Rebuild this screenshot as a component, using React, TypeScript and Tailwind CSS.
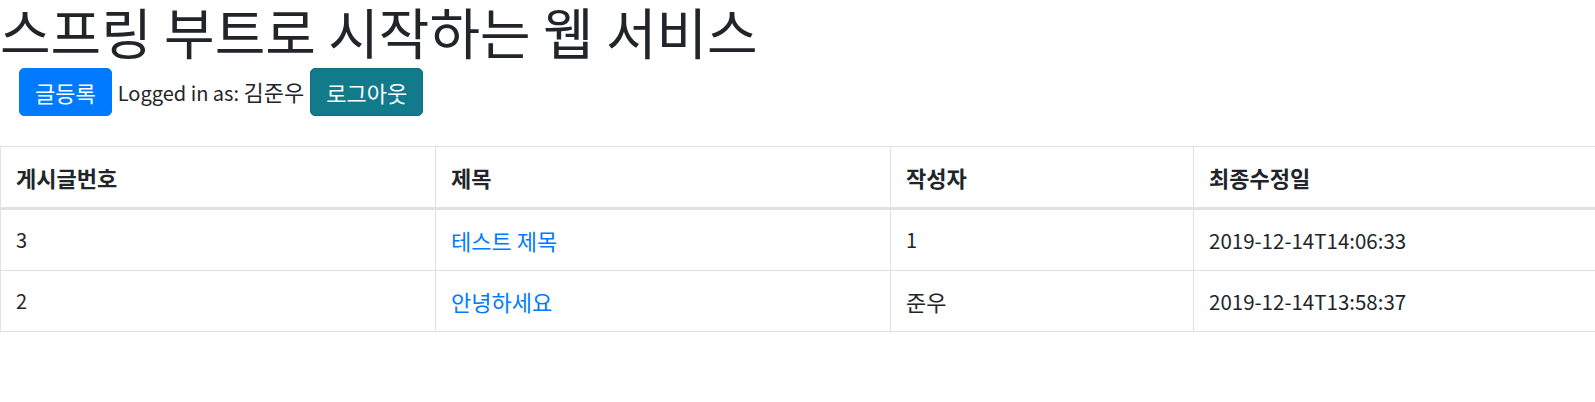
import React from "react";

const posts = [
  { id: 3, title: "테스트 제목", author: "1", modified: "2019-12-14T14:06:33" },
  { id: 2, title: "안녕하세요", author: "준우", modified: "2019-12-14T13:58:37" },
];

// hangul-only text renders a touch wider than the latin next to it
const ko = "text-[22px]";
const cell = "border border-[#dee2e6] px-[15px] py-[15px]";

export default function App() {
  return (
    <div
      className="min-h-screen bg-white text-[#212529] text-[20px] leading-[30px] overflow-hidden"
      style={{ fontFamily: '"Noto Sans CJK KR", "Noto Sans", sans-serif' }}
    >
      {/* Title */}
      <h1 className="text-[55px] leading-[60px] font-normal mb-[8px] whitespace-nowrap">
        스프링 부트로 시작하는 웹 서비스
      </h1>

      {/* Actions */}
      <div className="px-[19px] flex items-center gap-[6px]">
        <a className={`${ko} inline-block bg-[#007bff] border border-[#007bff] text-white rounded-[5px] px-[15px] py-[8px] leading-[30px]`}>
          글등록
        </a>
        <span>
          Logged in as: <span className={ko}>김준우</span>
        </span>
        <a className={`${ko} inline-block bg-[#117a8b] border border-[#10707f] text-white rounded-[5px] px-[15px] py-[8px] leading-[30px]`}>
          로그아웃
        </a>
      </div>

      {/* Posts table */}
      <table className="w-full mt-[30px] border-collapse">
        <thead>
          <tr className={`${ko} text-left`}>
            <th className={`${cell} w-[435px] border-b-[3px] font-bold`}>게시글번호</th>
            <th className={`${cell} w-[455px] border-b-[3px] font-bold`}>제목</th>
            <th className={`${cell} w-[303px] border-b-[3px] font-bold`}>작성자</th>
            <th className={`${cell} border-b-[3px] border-r-0 font-bold`}>최종수정일</th>
          </tr>
        </thead>
        <tbody>
          {posts.map((p) => (
            <tr key={p.id}>
              <td className={cell}>{p.id}</td>
              <td className={`${cell} ${ko}`}>
                <a className="text-[#007bff]">{p.title}</a>
              </td>
              <td className={`${cell} ${/[가-힣]/.test(p.author) ? ko : ""}`}>{p.author}</td>
              <td className={`${cell} border-r-0 text-[20.5px]`}>{p.modified}</td>
            </tr>
          ))}
        </tbody>
      </table>
    </div>
  );
}
